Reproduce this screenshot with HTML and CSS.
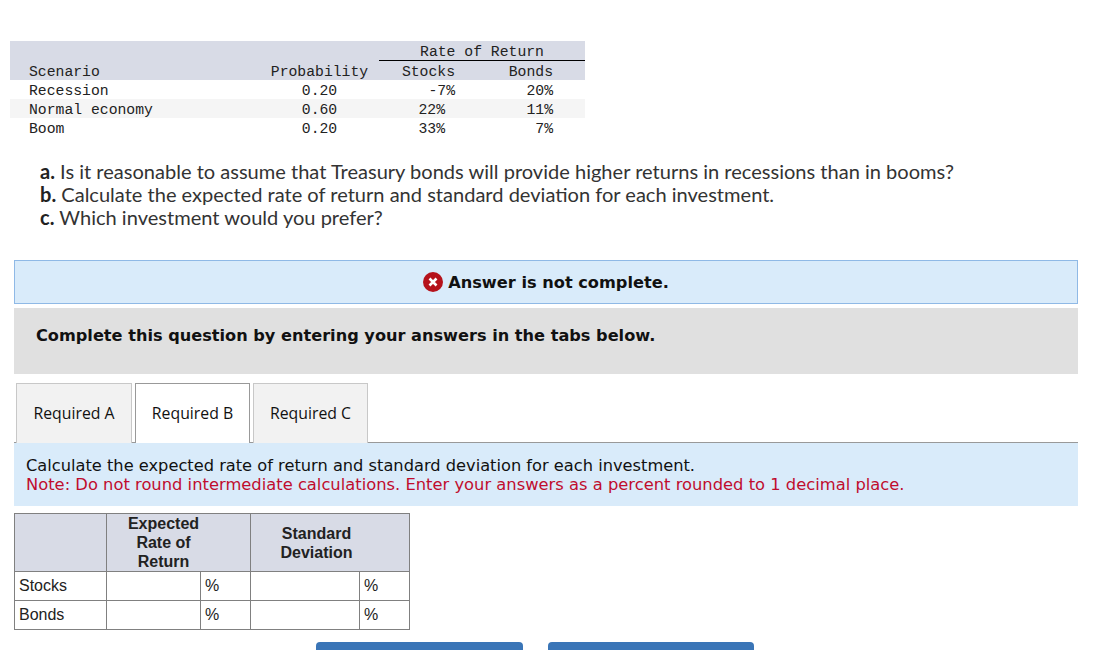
FILE: index.html
```html
<!DOCTYPE html>
<html lang="en">
<head>
    <meta charset="UTF-8">
    <meta name="viewport" content="width=device-width, initial-scale=1.0">
    <title>Required B</title>
    <link rel="stylesheet" href="styles.css">
</head>
<body>
    <table class="returns">
        <colgroup>
            <col class="c-name">
            <col class="c-prob">
            <col class="c-stocks">
            <col class="c-bonds">
        </colgroup>
        <thead>
            <tr>
                <th></th>
                <th></th>
                <th colspan="2" class="group">Rate of Return</th>
            </tr>
            <tr>
                <th class="name">Scenario</th>
                <th class="prob">Probability</th>
                <th class="stocks">Stocks</th>
                <th class="bonds">Bonds</th>
            </tr>
        </thead>
        <tbody>
            <tr>
                <td class="name">Recession</td>
                <td class="prob">0.20</td>
                <td class="stocks">-7%</td>
                <td class="bonds">20%</td>
            </tr>
            <tr class="alt">
                <td class="name">Normal economy</td>
                <td class="prob">0.60</td>
                <td class="stocks short">22%</td>
                <td class="bonds">11%</td>
            </tr>
            <tr>
                <td class="name">Boom</td>
                <td class="prob">0.20</td>
                <td class="stocks short">33%</td>
                <td class="bonds">7%</td>
            </tr>
        </tbody>
    </table>

    <div class="question">
        <div><b>a.</b> Is it reasonable to assume that Treasury bonds will provide higher returns in recessions than in booms?</div>
        <div><b>b.</b> Calculate the expected rate of return and standard deviation for each investment.</div>
        <div><b>c.</b> Which investment would you prefer?</div>
    </div>

    <div class="alert">
        <svg class="alert-icon" width="20" height="20" viewBox="0 0 20 20">
            <circle cx="10" cy="10" r="10" fill="#b5121b"/>
            <path d="M6.5 6.5l7 7M13.5 6.5l-7 7" stroke="#fff" stroke-width="2.6"/>
        </svg>
        <span>Answer is not complete.</span>
    </div>

    <div class="instructions">Complete this question by entering your answers in the tabs below.</div>

    <div class="tabs">
        <div class="tab">Required A</div>
        <div class="tab active">Required B</div>
        <div class="tab">Required C</div>
    </div>

    <div class="panel">
        <div>Calculate the expected rate of return and standard deviation for each investment.</div>
        <div class="note">Note: Do not round intermediate calculations. Enter your answers as a percent rounded to 1 decimal place.</div>
    </div>

    <table class="answers">
        <colgroup>
            <col class="c-label">
            <col class="c-input">
            <col class="c-unit">
            <col class="c-input-wide">
            <col class="c-unit">
        </colgroup>
        <thead>
            <tr>
                <th></th>
                <th colspan="2"><div class="head-exp">Expected<br>Rate of<br>Return</div></th>
                <th colspan="2"><div class="head-std">Standard<br>Deviation</div></th>
            </tr>
        </thead>
        <tbody>
            <tr>
                <td>Stocks</td>
                <td></td>
                <td>%</td>
                <td></td>
                <td>%</td>
            </tr>
            <tr>
                <td>Bonds</td>
                <td></td>
                <td>%</td>
                <td></td>
                <td>%</td>
            </tr>
        </tbody>
    </table>

    <div class="nav">
        <div class="nav-btn"></div>
        <div class="nav-btn"></div>
    </div>
</body>
</html>
```

FILE: styles.css
```css
html, body {
    height: 650px;
    overflow: hidden;
}
body {
    margin: 0;
    background-color: white;
    color: #111;
    font-family: "Liberation Sans", Arial, sans-serif;
}
.returns {
    width: 575px;
    margin: 41px 0 0 10px;
    border-collapse: collapse;
    table-layout: fixed;
    font-family: "Liberation Mono", monospace;
    font-size: 14.75px;
    color: #222;
}
.c-name {
    width: 250px;
}
.c-prob {
    width: 119px;
}
.c-stocks {
    width: 91px;
}
.c-bonds {
    width: 115px;
}
.returns th, .returns td {
    height: 15px;
    padding: 4px 0 0;
    font-weight: normal;
    line-height: 15px;
    white-space: nowrap;
}
.returns thead th {
    background-color: #d8dbe6;
}
.returns .group {
    border-bottom: 1px solid black;
    text-align: center;
}
.returns .name {
    padding-left: 19px;
    text-align: left;
}
.returns .prob {
    text-align: center;
}
.returns .stocks {
    padding-right: 15px;
    text-align: right;
}
.returns .short {
    padding-right: 25px;
}
.returns .bonds {
    padding-right: 32px;
    text-align: right;
}
.returns .alt td {
    background-color: #f5f5f5;
}
.question {
    margin: 23px 0 0 40px;
    font-family: Lato, sans-serif;
    font-size: 20.06px;
    line-height: 23px;
    color: #333;
}
.question b {
    color: #222;
}
.alert {
    display: flex;
    justify-content: center;
    align-items: center;
    gap: 5px;
    box-sizing: border-box;
    width: 1064px;
    height: 44px;
    margin: 31px 0 0 14px;
    background-color: #d9ebfa;
    border: 1px solid #8fb9e6;
    font-family: "DejaVu Sans", Verdana, sans-serif;
    font-size: 16.2px;
    font-weight: bold;
}
.instructions {
    box-sizing: border-box;
    width: 1064px;
    height: 66px;
    margin: 4px 0 0 14px;
    padding: 18px 22px 0;
    background-color: #e0e0e0;
    font-family: "DejaVu Sans", Verdana, sans-serif;
    font-size: 16.16px;
    font-weight: bold;
    line-height: 20px;
}
.tabs {
    display: flex;
    gap: 3px;
    box-sizing: border-box;
    width: 1064px;
    height: 60px;
    margin: 9px 0 0 14px;
    padding-left: 2px;
    border-bottom: 1px solid #999;
}
.tab {
    box-sizing: border-box;
    height: 60px;
    width: 115px;
    padding-top: 19px;
    background-color: #f2f2f2;
    border: 1px solid #c8c8c8;
    border-bottom: 0;
    font-family: "Open Sans", sans-serif;
    font-size: 15.8px;
    line-height: 20px;
    text-align: center;
}
.tab:first-child {
    width: 116px;
}
.tab.active {
    background-color: white;
    border-color: #999;
    position: relative;
    z-index: 1;
}
.panel {
    box-sizing: border-box;
    width: 1064px;
    height: 63px;
    margin-left: 14px;
    padding: 13px 12px 0;
    background-color: #d9ebfa;
    font-family: "DejaVu Sans", Verdana, sans-serif;
    font-size: 16.24px;
    line-height: 19px;
}
.note {
    color: #c00d2e;
    font-size: 16.33px;
}
.answers {
    margin: 7px 0 0 14px;
    border-collapse: collapse;
    table-layout: fixed;
    width: 395px;
    font-size: 16px;
    color: #222;
}
.c-label {
    width: 92px;
}
.c-input {
    width: 94px;
}
.c-input-wide {
    width: 109px;
}
.c-unit {
    width: 50px;
}
.answers th, .answers td {
    padding: 0;
    border: 1px solid #808080;
}
.answers th {
    height: 57px;
    background-color: #d8dbe6;
    font-size: 16px;
    line-height: 19px;
}
.answers td {
    height: 28px;
    padding-left: 4px;
}
.head-exp {
    padding-right: 30px;
}
.head-std {
    padding-right: 27px;
}
.nav {
    display: flex;
    gap: 25px;
    margin: 12px 0 0 316px;
}
.nav-btn {
    width: 207px;
    height: 40px;
    background-color: #3a75b7;
    border-radius: 4px;
}
.nav-btn + .nav-btn {
    width: 206px;
}
```
